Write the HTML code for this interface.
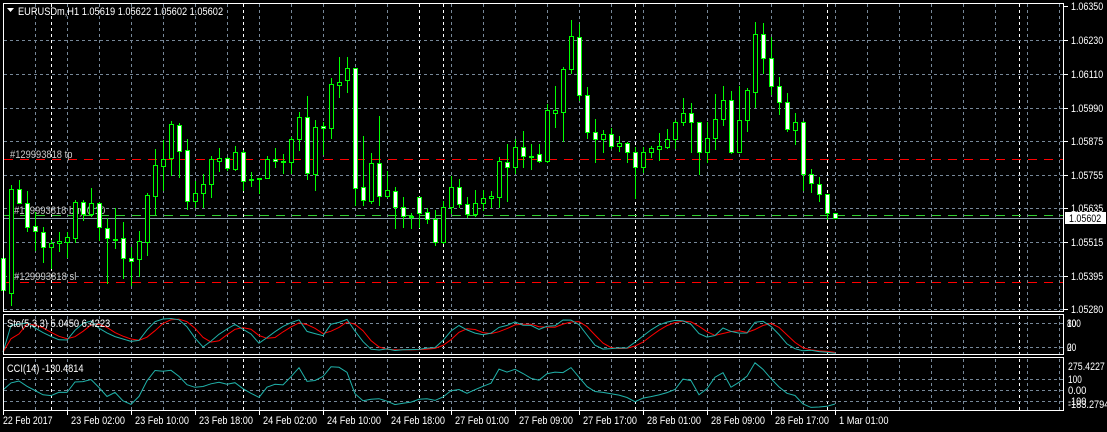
<!DOCTYPE html>
<html><head><meta charset="utf-8"><style>
html,body{margin:0;padding:0;background:#000;width:1107px;height:432px;overflow:hidden}
svg{display:block}
text{font-family:"Liberation Sans",sans-serif;font-size:11px}
</style></head><body>
<svg id="s" width="1107" height="432" xmlns="http://www.w3.org/2000/svg" shape-rendering="crispEdges"></svg>
<script>
var D=[
[258,290,252,293,1],[189,293,185,305,0],[189,203,180,203,1],[203,227,191,231,1],[226,231,212,250,1],[232,247,227,262,1],[243,247,240,268,0],[241,243,232,251,0],[237,242,232,257,0],[202,238,200,242,0],
[202,214,200,220,1],[203,214,188,216,0],[203,227,202,240,1],[228,238,218,283,1],[239,240,208,248,0],[238,258,222,278,1],[258,261,247,285,1],[241,259,231,276,0],[195,242,193,255,0],[165,196,149,214,0],
[159,166,140,190,0],[124,158,121,175,0],[125,151,123,177,1],[150,201,139,209,1],[193,201,181,207,0],[184,193,174,207,0],[159,184,156,197,0],[158,161,148,171,0],[158,168,157,170,1],[152,169,146,170,0],
[152,181,150,190,1],[179,180,172,186,0],[178,179,178,193,0],[159,178,156,178,0],[159,161,148,167,1],[161,162,154,173,0],[139,162,137,173,0],[117,139,112,150,0],[117,173,96,179,1],[127,174,120,190,0],
[126,128,122,154,1],[84,128,78,138,0],[82,85,57,97,0],[68,80,57,92,0],[68,188,68,205,1],[187,200,136,205,1],[163,201,153,203,0],[163,196,116,205,1],[190,196,171,197,0],[191,207,187,228,1],
[207,216,197,227,1],[216,217,213,228,0],[197,213,197,227,1],[212,219,208,223,1],[219,242,210,245,1],[207,242,201,243,0],[187,207,176,213,0],[187,204,179,207,1],[204,214,197,217,1],[203,214,190,216,0],
[198,203,190,210,0],[196,198,191,207,0],[161,197,157,207,0],[162,167,144,201,1],[147,167,139,173,0],[147,156,131,167,1],[156,157,144,169,0],[154,161,144,162,1],[110,161,104,162,0],[110,113,86,127,0],
[69,112,67,141,0],[36,69,20,73,0],[37,95,24,100,1],[95,132,87,138,1],[132,139,119,162,1],[134,139,130,152,0],[134,146,128,148,1],[143,146,136,151,0],[143,152,142,162,1],[152,167,147,198,1],
[152,167,147,172,0],[148,152,146,157,0],[146,149,133,160,0],[139,147,129,148,0],[122,139,120,148,0],[113,122,98,125,0],[113,122,103,152,1],[122,152,122,174,1],[138,152,122,162,0],[119,138,94,149,0],
[100,119,86,125,0],[100,152,91,153,1],[120,152,86,152,0],[90,120,88,131,0],[34,92,22,107,0],[34,58,23,73,1],[58,86,37,94,1],[86,102,77,114,1],[102,129,93,131,1],[122,130,113,144,0],
[122,174,121,190,1],[174,183,169,192,1],[184,194,177,201,1],[194,213,194,219,1],[213,218,213,218,1]];
var o='';
function L(x1,y1,x2,y2,c,da,w){o+='<line x1="'+x1+'" y1="'+y1+'" x2="'+x2+'" y2="'+y2+'" stroke="'+c+'"'+(da?' stroke-dasharray="'+da+'"':'')+(w?' stroke-width="'+w+'"':'')+'/>';}
function T(x,y,t,c,f){f=f||4.6;o+='<text x="'+x+'" y="'+y+'" fill="'+(c||'#fff')+'" textLength="'+(t.length*f).toFixed(1)+'" lengthAdjust="spacingAndGlyphs">'+t+'</text>';}
var G='#778899',panels=[[4,311],[316,354],[359,410]];
var whites=[51,243,419,443,635,827,1019];
for(var p=0;p<3;p++){var a=panels[p];
 for(var x=35;x<1064;x+=32){ if(whites.indexOf(x+0)>=0) continue; L(x+.5,a[0],x+.5,a[1],G,'3,3');}
 whites.forEach(function(x){L(x+.5,a[0],x+.5,a[1],'#fff','3,3');});
}
[40,74,108,141,175,208,242,276,309].forEach(function(y){L(4,y+.5,1063,y+.5,G,'3,3');});
[323,347].forEach(function(y){L(4,y+.5,1063,y+.5,G,'3,3');});
[379,390,401].forEach(function(y){L(4,y+.5,1063,y+.5,G,'3,3');});
L(4,159.5,1063,159.5,'#f00','9,7');
L(4,215.5,1063,215.5,'#32cd32','9,7');
L(4,218.5,1063,218.5,'#8a9aa8');
L(4,282.5,1063,282.5,'#f00','9,7');
T(10,158,'#129993818 tp','#c8c8c8',4.8);
T(14,214,'#129993818 buy 0.10','#c8c8c8',4.8);
T(14,280,'#129993818 sl','#c8c8c8',4.8);
D.forEach(function(d,i){var cx=3+8*i;
 L(cx+.5,d[2],cx+.5,d[3]+1,'#0f0');
 o+='<rect x="'+(cx-1.5)+'" y="'+(d[0]+.5)+'" width="4" height="'+Math.max(1,d[1]-d[0])+'" fill="'+(d[4]?'#fff':'#000')+'" stroke="#0f0"/>';
});
var n=D.length,C=[],H=[],Lo=[];
D.forEach(function(d){C.push(-(d[4]?d[1]:d[0]));H.push(-d[2]);Lo.push(-d[3]);});
var rn=[],rd=[];
for(var i=0;i<n;i++){var s=Math.max(0,i-4),hh=-1e9,ll=1e9;for(var j=s;j<=i;j++){hh=Math.max(hh,H[j]);ll=Math.min(ll,Lo[j]);}rn.push(C[i]-ll);rd.push(hh-ll);}
var K=[],Dd=[];
for(i=0;i<n;i++){var a1=0,b1=0;for(j=Math.max(0,i-2);j<=i;j++){a1+=rn[j];b1+=rd[j];}K.push(b1?100*a1/b1:50);}
for(i=0;i<n;i++){var t=0,c=0;for(j=Math.max(0,i-2);j<=i;j++){t+=K[j];c++;}Dd.push(t/c);}
var TP=[],CCI=[];for(i=0;i<n;i++)TP.push((H[i]+Lo[i]+C[i])/3);
for(i=0;i<n;i++){var s2=Math.max(0,i-13),m=0,c2=0;for(j=s2;j<=i;j++){m+=TP[j];c2++;}m/=c2;var md=0;for(j=s2;j<=i;j++)md+=Math.abs(TP[j]-m);md/=c2;CCI.push(md?(TP[i]-m)/(0.015*md):0);}
function poly(arr,f,c){var pts=arr.map(function(v,i){return (3+8*i)+','+f(v).toFixed(1)}).join(' ');o+='<polyline points="'+pts+'" fill="none" stroke="'+c+'" shape-rendering="auto"/>';}
var sy=function(v){return 355-v*0.4};
poly(Dd,sy,'#f00');poly(K,sy,'#20b2aa');
poly(CCI,function(v){v=Math.max(-183,Math.min(275,v));return 390-v*0.107},'#20b2aa');
o+='<rect x="3.5" y="3.5" width="1060" height="308" fill="none" stroke="#fff"/>';
o+='<rect x="3.5" y="314.5" width="1060" height="40" fill="none" stroke="#fff"/>';
o+='<rect x="3.5" y="357.5" width="1060" height="53" fill="none" stroke="#fff"/>';
var PL=[['1.06350',6],['1.06230',40],['1.06110',74],['1.05990',108],['1.05875',141],['1.05755',175],['1.05635',208],['1.05515',242],['1.05395',276],['1.05280',309]];
PL.forEach(function(p){L(1064,p[1]+.5,1068,p[1]+.5,'#fff');T(1071,p[1]+4,p[0]);});
o+='<rect x="1065" y="212" width="41" height="12" fill="#fff"/>';T(1069,222,'1.05602','#000');
T(1067,327,'100');T(1067,327,'80');T(1067,351,'20');T(1067,351,'0');
T(1068,370,'275.4227');T(1068,383,'100');T(1068,394,'0.00');T(1068,405,'-100');T(1068,408,'-183.2794');
var TL=['22 Feb 2017','23 Feb 02:00','23 Feb 10:00','23 Feb 18:00','24 Feb 02:00','24 Feb 10:00','24 Feb 18:00','27 Feb 01:00','27 Feb 09:00','27 Feb 17:00','28 Feb 01:00','28 Feb 09:00','28 Feb 17:00','1 Mar 01:00'];
TL.forEach(function(t,i){var x=3+64*i;L(x+.5,411,x+.5,415,'#fff');T(x+(i?4:0),424,t,'#fff',4.5);});
o+='<polygon points="7,8 14,8 10.5,12" fill="#fff" shape-rendering="auto"/>';
T(18,15,'EURUSDm,H1  1.05619 1.05622 1.05602 1.05602','#fff',4.77);
T(7,327,'Sto(5,3,3) 5.0450 6.4223','#fff',4.3);
T(7,372,'CCI(14) -130.4814','#fff',4.5);
document.getElementById('s').innerHTML=o;
</script>
</body></html>
